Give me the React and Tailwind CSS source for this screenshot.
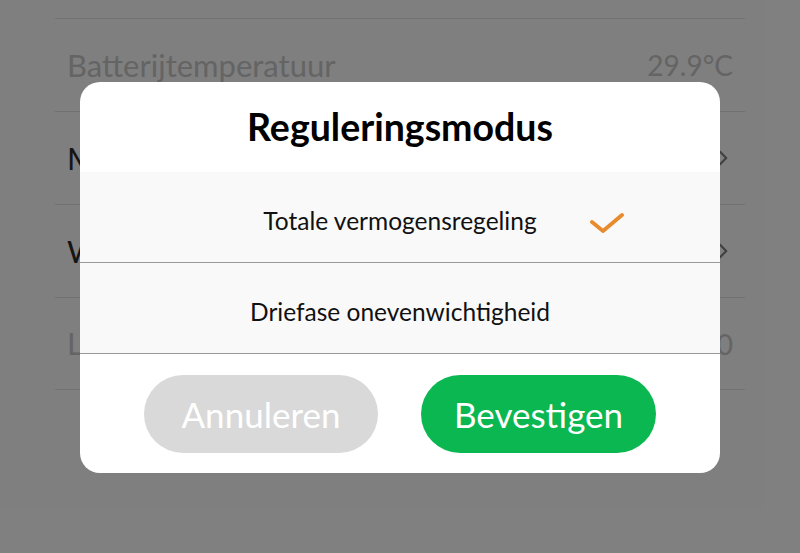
import React from 'react';
import { ChevronRight } from 'lucide-react';

const rows = [
  { label: 'Batterijtemperatuur', value: '29.9°C', muted: true },
  { label: 'Maximaal vermogen', chevron: true },
  { label: 'Werkmodus', chevron: true },
  { label: 'Lastvermogen', value: '0', muted: true },
];

const options = ['Totale vermogensregeling', 'Driefase onevenwichtigheid'];

const CheckMark = () => (
  <svg width="34" height="22" viewBox="0 0 34 22" fill="none">
    <polyline points="2,10 13,19 32,3" stroke="#e98a2c" strokeWidth="3.8" strokeLinecap="round" strokeLinejoin="round" />
  </svg>
);

const App = () => {
  const selected = 0;

  return (
    <div className="relative w-[800px] h-[553px] overflow-hidden bg-white font-['Lato',sans-serif]">
      {/* settings list underneath */}
      <div className="mx-[55px] pt-[18px]">
        {rows.map(row => (
          <div key={row.label} className="flex items-center justify-between h-[93px] px-3 border-t border-[#e2e2e2] last:border-b">
            <span className={`text-[31px] ${row.muted ? 'text-[#c9c9c9]' : 'text-[#2a2a2a]'}`}>{row.label}</span>
            {row.value && <span className="text-[28px] text-[#c9c9c9]">{row.value}</span>}
            {row.chevron && <ChevronRight className="w-[26px] h-[26px] text-[#808080] -mr-[3px]" strokeWidth={2} />}
          </div>
        ))}
      </div>

      {/* overlay + dialog */}
      <div className="absolute inset-0 bg-black/50 flex items-center justify-center">
        <div className="w-[640px] bg-white rounded-[20px] overflow-hidden mt-[2px]">
          <div className="h-[90px] flex items-center justify-center">
            <h2 className="text-[37.5px] font-bold text-black">Reguleringsmodus</h2>
          </div>
          <div className="bg-[#f9f9f9]">
            {options.map((opt, i) => (
              <div key={opt} className="relative h-[91px] flex items-center justify-center pt-[8px] border-b-[1.5px] border-[#9a9a9a]">
                <span className="text-[24.5px] text-[#111]">{opt}</span>
                {i === selected && (
                  <span className="absolute right-[96px] top-[40px]">
                    <CheckMark />
                  </span>
                )}
              </div>
            ))}
          </div>
          <div className="flex justify-center gap-[43px] pt-[21px] pb-[20px]">
            <button className="w-[234px] h-[78px] rounded-full bg-[#d9d9d9] text-white text-[35px]">Annuleren</button>
            <button className="w-[235px] h-[78px] rounded-full bg-[#0bb750] text-white text-[35px]">Bevestigen</button>
          </div>
        </div>
      </div>
    </div>
  );
};

export default App;
